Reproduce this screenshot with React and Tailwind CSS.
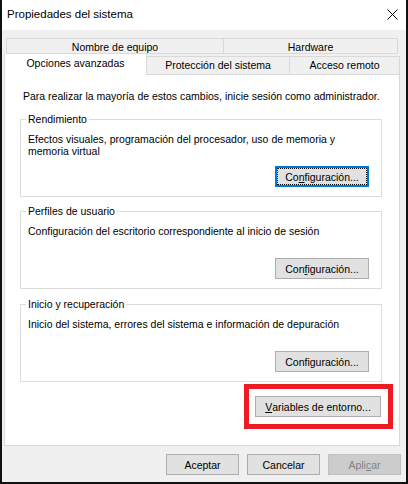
import React from "react";

function CloseIcon() {
  return (
    <svg width="11" height="11" viewBox="0 0 11 11" className="block">
      <path d="M0.5 0.5 L10.5 10.5 M10.5 0.5 L0.5 10.5" stroke="#000" strokeWidth="1" fill="none" />
    </svg>
  );
}

function Group({ title, children, button, className }) {
  return (
    <div
      className={`relative ml-[15px] mr-[17px] h-[78px] border border-[#dcdcdc] flex flex-col pl-[7px] pt-[13px] pb-[9px] pr-[12px] ${className}`}
    >
      <span className="absolute -top-[7px] left-[5px] px-[2px] bg-white leading-[12px]">{title}</span>
      <div className="leading-[12px]">{children}</div>
      <div className="mt-auto self-end">{button}</div>
    </div>
  );
}

function ConfigButton({ children }) {
  return (
    <div className="w-[94px] h-[21px] border border-[#adadad] bg-[#e1e1e1] flex items-center justify-center leading-[12px]">
      {children}
    </div>
  );
}

export default function App() {
  return (
    <div className="w-[408px] h-[484px] bg-[#101010] pl-[2px] pr-[2px] pb-[2px] font-['Liberation_Sans',Arial,sans-serif] text-[10.5px] text-black">
      <div className="h-full flex flex-col bg-[#f0f0f0]">
        {/* Title bar */}
        <div className="h-[30px] bg-white flex items-start justify-between">
          <div className="pl-[5px] pt-[7px] text-[11.5px] leading-[14px]">Propiedades del sistema</div>
          <div className="mt-[9px] mr-[8px]">
            <CloseIcon />
          </div>
        </div>

        {/* Tabs + panel */}
        <div className="ml-[2px] mr-[6px] mt-[8px] flex flex-col">
          {/* Row 1 */}
          <div className="flex h-[16px] mx-[2px] border border-[#d9d9d9]">
            <div className="w-[217px] border-r border-[#d9d9d9] text-center leading-[15px] pt-[1px]">Nombre de equipo</div>
            <div className="flex-1 text-center leading-[15px] pt-[1px]">Hardware</div>
          </div>
          {/* Row 2 */}
          <div className="flex h-[20px]">
            <div className="relative z-10 w-[143px] h-[21px] bg-white border-l border-r border-[#d9d9d9] text-center leading-[15px] pt-[2px]">
              Opciones avanzadas
            </div>
            <div className="w-[143px] mt-[2px] h-[18px] border-t border-r border-[#d9d9d9] text-center leading-[15px] pt-[1px]">
              Protección del sistema
            </div>
            <div className="flex-1 mt-[2px] h-[18px] border-t border-r border-[#d9d9d9] text-center leading-[15px] pt-[1px]">
              Acceso remoto
            </div>
          </div>
          {/* Panel */}
          <div className="h-[372px] border border-[#d9d9d9] bg-white flex flex-col pt-[15px]">
            <div className="pl-[18px] leading-[12px]">
              Para realizar la mayoría de estos cambios, inicie sesión como administrador.
            </div>

            <Group
              className="mt-[17px]"
              title="Rendimiento"
              button={
                <div className="w-[94px] h-[21px] border-2 border-[#0078d7] bg-[#e1e1e1]">
                  <div className="w-full h-full border border-dotted border-black flex items-center justify-center leading-[12px]">
                    Co<span className="underline">n</span>figuración...
                  </div>
                </div>
              }
            >
              Efectos visuales, programación del procesador, uso de memoria y
              <br />
              memoria virtual
            </Group>

            <Group
              className="mt-[14px]"
              title="Perfiles de usuario"
              button={
                <ConfigButton>
                  Con<span className="underline">f</span>iguración...
                </ConfigButton>
              }
            >
              Configuración del escritorio correspondiente al inicio de sesión
            </Group>

            <Group
              className="mt-[15px]"
              title="Inicio y recuperación"
              button={
                <ConfigButton>
                  Confi<span className="underline">g</span>uración...
                </ConfigButton>
              }
            >
              Inicio del sistema, errores del sistema e información de depuración
            </Group>

            <div className="mt-[2px] mr-[6px] self-end border-[5px] border-[#ed1c24] pl-[6px] pr-[7px] py-[7px]">
              <div className="w-[126px] h-[21px] border border-[#adadad] bg-[#e1e1e1] flex items-center justify-center leading-[12px]">
                <span className="underline">V</span>ariables de entorno...
              </div>
            </div>
          </div>
        </div>

        {/* Bottom buttons */}
        <div className="mt-[8px] mr-[5px] flex justify-end gap-[8px]">
          <div className="w-[73px] h-[21px] border border-[#adadad] bg-[#e1e1e1] flex items-center justify-center leading-[12px]">
            Aceptar
          </div>
          <div className="w-[73px] h-[21px] border border-[#adadad] bg-[#e1e1e1] flex items-center justify-center leading-[12px]">
            Cancelar
          </div>
          <div className="w-[73px] h-[21px] border border-[#bfbfbf] bg-[#cccccc] text-[#838383] flex items-center justify-center leading-[12px]">
            Apli<span className="underline">c</span>ar
          </div>
        </div>
      </div>
    </div>
  );
}
